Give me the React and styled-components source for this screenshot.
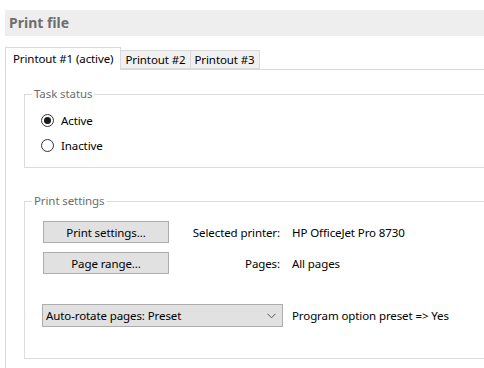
import React from "react";
import styled, { createGlobalStyle } from "styled-components";

const GlobalStyle = createGlobalStyle`
  html, body {
    margin: 0;
    padding: 0;
    background: #ffffff;
  }
  body {
    font-family: "Noto Sans", "Open Sans", sans-serif;
    font-size: 11.5px;
    letter-spacing: -0.1px;
    color: #000000;
    overflow: hidden;
  }
`;

const Page = styled.div`
  width: 484px;
  height: 368px;
  overflow: hidden;
  padding-top: 10px;
  box-sizing: border-box;
`;

const Header = styled.div`
  margin-left: 5px;
  height: 26px;
  line-height: 26px;
  padding-left: 4px;
  background: #eeeeee;
  font-size: 14px;
  font-weight: 700;
  letter-spacing: 0;
  color: #6e6e6e;
`;

const TabStrip = styled.div`
  display: flex;
  align-items: flex-end;
  margin-top: 11px;
  padding-left: 5px;
  position: relative;
  z-index: 1;
`;

const Tab = styled.div`
  box-sizing: border-box;
  height: ${(p) => (p.active ? "23px" : "19px")};
  line-height: ${(p) => (p.active ? "22px" : "18px")};
  padding: 0 ${(p) => (p.active ? "7px" : "4px")};
  margin-left: ${(p) => (p.first ? "0" : "-1px")};
  margin-bottom: ${(p) => (p.active ? "-1px" : "0")};
  background: ${(p) => (p.active ? "#ffffff" : "#f0f0f0")};
  border: 1px solid #d9d9d9;
  border-bottom: ${(p) => (p.active ? "none" : "1px solid #d9d9d9")};
  white-space: nowrap;
`;

const Panel = styled.div`
  margin-left: 5px;
  width: 540px;
  border-top: 1px solid #d9d9d9;
  border-left: 1px solid #d9d9d9;
  padding: 16px 0 40px 18px;
  box-sizing: border-box;
`;

const Group = styled.fieldset`
  margin: ${(p) => (p.spaced ? "25px" : "0")} 0 0 0;
  padding: 0 0 ${(p) => p.bottom || "0"} 0;
  border: 1px solid #dcdcdc;
  min-width: 0;
`;

const Legend = styled.legend`
  margin-left: 7px;
  padding: 0 2px;
  color: #6d6d6d;
  line-height: 16px;
`;

const RadioList = styled.div`
  display: flex;
  flex-direction: column;
  gap: 7px;
  padding: 9px 0 0 16px;
`;

const RadioRow = styled.label`
  display: flex;
  align-items: center;
  gap: 7px;
  height: 18px;
`;

const RadioCircle = styled.span`
  box-sizing: border-box;
  width: 13px;
  height: 13px;
  border-radius: 50%;
  border: 1px solid #333333;
  background: #ffffff;
  display: flex;
  align-items: center;
  justify-content: center;

  &::after {
    content: "";
    width: 7px;
    height: 7px;
    border-radius: 50%;
    background: ${(p) => (p.checked ? "#1a1a1a" : "transparent")};
  }
`;

const SettingsGrid = styled.div`
  display: grid;
  grid-template-columns: 126px 111px auto;
  column-gap: 0;
  row-gap: 9px;
  align-items: center;
  padding: 12px 0 0 18px;
`;

const Button = styled.div`
  box-sizing: border-box;
  height: 22px;
  background: #e1e1e1;
  border: 1px solid #adadad;
  display: flex;
  align-items: center;
  justify-content: center;
`;

const FieldLabel = styled.div`
  text-align: right;
`;

const FieldValue = styled.div`
  padding-left: 12px;
`;

const SelectRow = styled.div`
  display: flex;
  align-items: center;
  gap: 9px;
  margin: 30px 0 0 17px;
`;

const Select = styled.div`
  box-sizing: border-box;
  width: 241px;
  height: 23px;
  background: #e1e1e1;
  border: 1px solid #adadad;
  display: flex;
  align-items: center;
  justify-content: space-between;
  padding: 0 6px 0 3px;
`;

const Chevron = () => (
  <svg width="9" height="6" viewBox="0 0 9 6">
    <polyline points="0.5,0.8 4.5,4.8 8.5,0.8" fill="none" stroke="#555" strokeWidth="1" />
  </svg>
);

export default function App() {
  return (
    <Page>
      <GlobalStyle />
      <Header>Print file</Header>
      <TabStrip>
        <Tab active first>Printout #1 (active)</Tab>
        <Tab>Printout #2</Tab>
        <Tab>Printout #3</Tab>
      </TabStrip>
      <Panel>
        <Group bottom="13px">
          <Legend>Task status</Legend>
          <RadioList>
            <RadioRow>
              <RadioCircle checked />
              Active
            </RadioRow>
            <RadioRow>
              <RadioCircle />
              Inactive
            </RadioRow>
          </RadioList>
        </Group>
        <Group spaced bottom="31px">
          <Legend>Print settings</Legend>
          <SettingsGrid>
            <Button>Print settings...</Button>
            <FieldLabel>Selected printer:</FieldLabel>
            <FieldValue>HP OfficeJet Pro 8730</FieldValue>
            <Button>Page range...</Button>
            <FieldLabel>Pages:</FieldLabel>
            <FieldValue>All pages</FieldValue>
          </SettingsGrid>
          <SelectRow>
            <Select>
              <span>Auto-rotate pages: Preset</span>
              <Chevron />
            </Select>
            <span>Program option preset =&gt; Yes</span>
          </SelectRow>
        </Group>
      </Panel>
    </Page>
  );
}
